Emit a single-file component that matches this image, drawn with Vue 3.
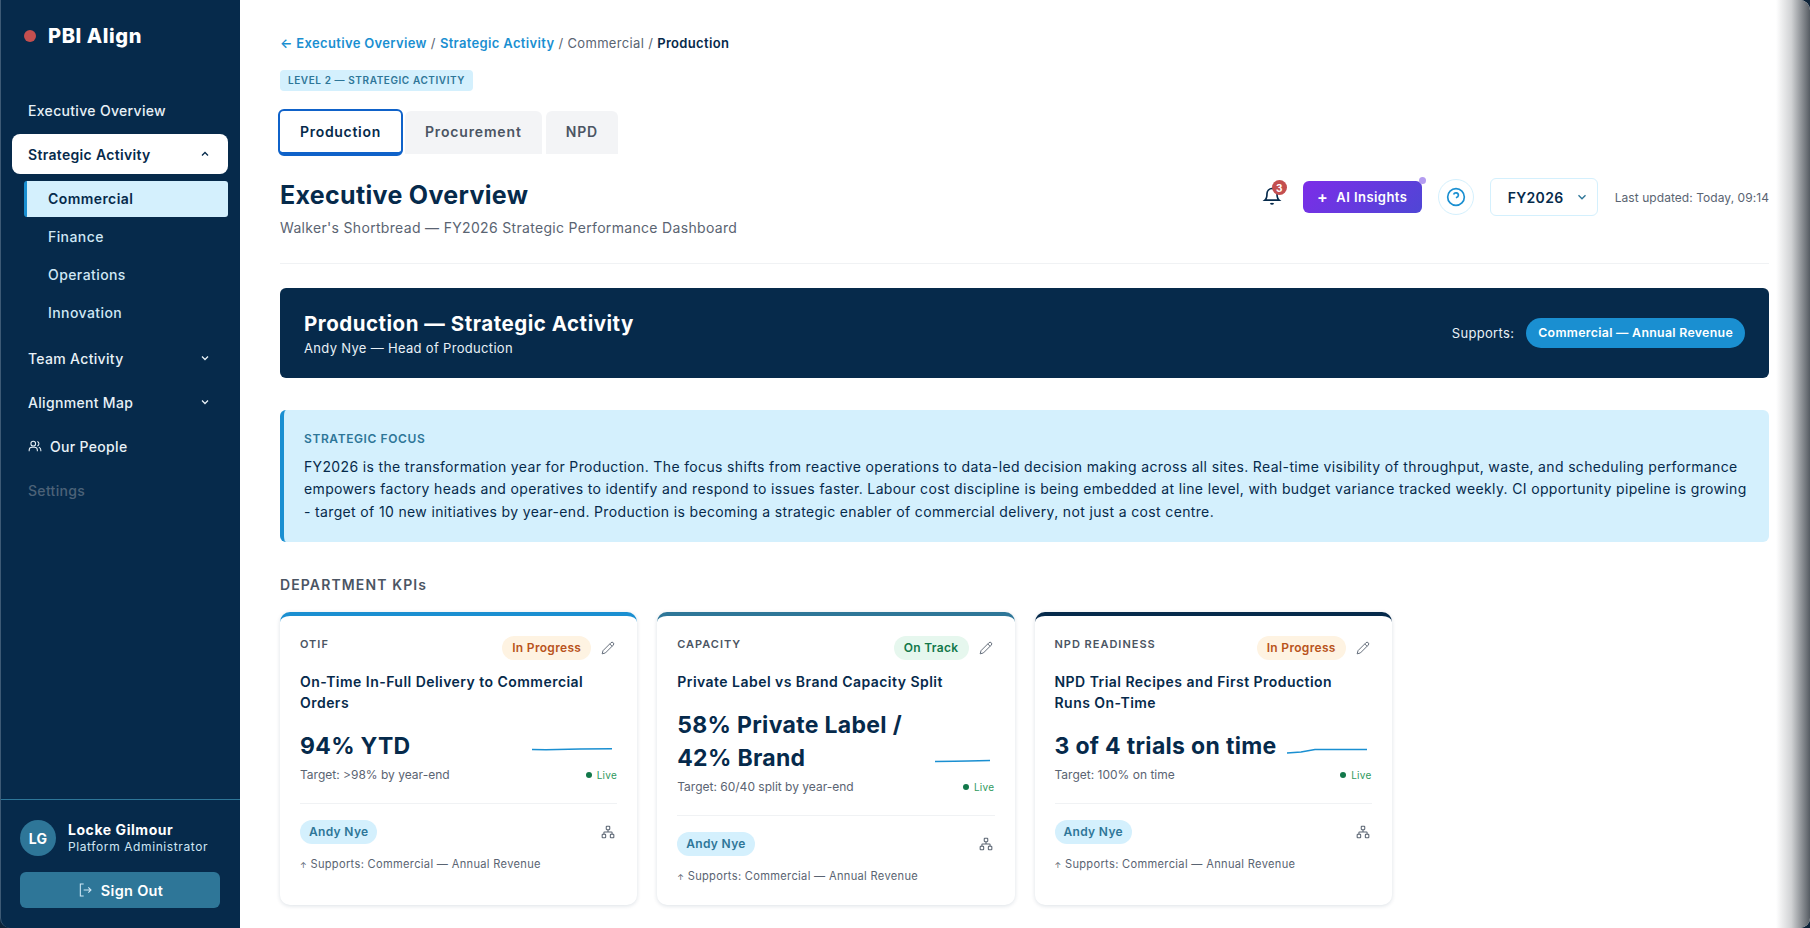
<script setup>
const subNav = [
  { label: 'Commercial', active: true },
  { label: 'Finance' },
  { label: 'Operations' },
  { label: 'Innovation' }
];

const tabs = ['Production', 'Procurement', 'NPD'];

const kpis = [
  {
    tag: 'OTIF',
    accent: '#1a8fd1',
    status: 'In Progress',
    statusClass: 'progress',
    title: 'On-Time In-Full Delivery to Commercial Orders',
    value: '94% YTD',
    target: 'Target: >98% by year-end',
    sparkWidth: 80,
    spark: 'M0 14.6 L14 14.8 L48 14 L80 13.8'
  },
  {
    tag: 'CAPACITY',
    accent: '#2e7698',
    status: 'On Track',
    statusClass: 'track',
    title: 'Private Label vs Brand Capacity Split',
    value: '58% Private Label / 42% Brand',
    target: 'Target: 60/40 split by year-end',
    sparkWidth: 55,
    spark: 'M0 14.6 L28 14.2 L48 14 L80 13.6'
  },
  {
    tag: 'NPD READINESS',
    accent: '#062a4b',
    status: 'In Progress',
    statusClass: 'progress',
    title: 'NPD Trial Recipes and First Production Runs On-Time',
    value: '3 of 4 trials on time',
    target: 'Target: 100% on time',
    sparkWidth: 80,
    spark: 'M0 18 L14 17 L28 14.6 L80 14.4'
  }
];
</script>

<template>
  <div class="app">
    <aside class="sidebar">
      <div class="logo">
        <span class="logo-dot"></span>
        <span class="logo-text">PBI Align</span>
      </div>

      <nav class="nav">
        <a class="nav-item">Executive Overview</a>
        <a class="nav-item active">
          Strategic Activity
          <svg class="chev" viewBox="0 0 12 12"><path d="M3 7.5 6 4.5 9 7.5" /></svg>
        </a>
        <div class="sub-nav">
          <a v-for="s in subNav" :key="s.label" class="sub-item" :class="{ active: s.active }">{{ s.label }}</a>
        </div>
        <a class="nav-item">
          Team Activity
          <svg class="chev" viewBox="0 0 12 12"><path d="M3 4.5 6 7.5 9 4.5" /></svg>
        </a>
        <a class="nav-item">
          Alignment Map
          <svg class="chev" viewBox="0 0 12 12"><path d="M3 4.5 6 7.5 9 4.5" /></svg>
        </a>
        <a class="nav-item people">
          <svg class="people-icon" viewBox="0 0 24 24">
            <circle cx="9" cy="8" r="4" />
            <path d="M2 21v-2a5 5 0 0 1 5-5h4a5 5 0 0 1 5 5v2" />
            <path d="M16 4.2a4 4 0 0 1 0 7.6" />
            <path d="M22 21v-2a5 5 0 0 0-3.5-4.7" />
          </svg>
          <span>Our People</span>
        </a>
        <a class="nav-item muted">Settings</a>
      </nav>

      <div class="user-box">
        <div class="user">
          <div class="avatar">LG</div>
          <div>
            <div class="user-name">Locke Gilmour</div>
            <div class="user-role">Platform Administrator</div>
          </div>
        </div>
        <button class="sign-out">
          <svg viewBox="0 0 24 24"><path d="M10 3H5v18h5" /><path d="M10 12h11M17 8l4 4-4 4" /></svg>
          Sign Out
        </button>
      </div>
    </aside>

    <main class="main">
      <div class="crumbs"><a>← Executive Overview</a> / <a>Strategic Activity</a> / Commercial / <strong>Production</strong></div>
      <div class="level"><span>LEVEL 2 — STRATEGIC ACTIVITY</span></div>

      <div class="tabs">
        <button v-for="(t, i) in tabs" :key="t" class="tab" :class="{ on: i === 0 }">{{ t }}</button>
      </div>

      <header class="head">
        <div>
          <h1>Executive Overview</h1>
          <p>Walker's Shortbread — FY2026 Strategic Performance Dashboard</p>
        </div>
        <div class="tools">
          <div class="bell">
            <svg viewBox="0 0 24 24">
              <path d="M6 9a6 6 0 0 1 12 0c0 6 2.5 8 2.5 8h-17S6 15 6 9" />
              <path d="M10.3 20.5a2 2 0 0 0 3.4 0" />
            </svg>
            <span class="bell-count">3</span>
          </div>
          <button class="ai">
            <span class="ai-plus">+</span> AI Insights
            <span class="ai-dot"></span>
          </button>
          <button class="help">
            <svg viewBox="0 0 24 24">
              <circle cx="12" cy="12" r="10" />
              <path d="M9.1 9a3 3 0 0 1 5.8 1c0 2-3 3-3 3" />
              <path d="M12 17h.01" />
            </svg>
          </button>
          <div class="year">
            FY2026
            <svg viewBox="0 0 12 12"><path d="M3 4.5 6 7.5 9 4.5" /></svg>
          </div>
          <span class="updated">Last updated: Today, 09:14</span>
        </div>
      </header>

      <section class="banner">
        <div>
          <h2>Production — Strategic Activity</h2>
          <div class="banner-sub">Andy Nye — Head of Production</div>
        </div>
        <div class="supports">
          <span>Supports:</span>
          <b>Commercial — Annual Revenue</b>
        </div>
      </section>

      <section class="focus">
        <div class="focus-label">STRATEGIC FOCUS</div>
        <p>FY2026 is the transformation year for Production. The focus shifts from reactive operations to data-led decision making across all sites. Real-time visibility of throughput, waste, and scheduling performance empowers factory heads and operatives to identify and respond to issues faster. Labour cost discipline is being embedded at line level, with budget variance tracked weekly. CI opportunity pipeline is growing - target of 10 new initiatives by year-end. Production is becoming a strategic enabler of commercial delivery, not just a cost centre.</p>
      </section>

      <h3 class="kpi-head">DEPARTMENT KPIs</h3>

      <div class="kpis">
        <article v-for="k in kpis" :key="k.tag" class="card" :style="{ borderTopColor: k.accent }">
          <div class="card-top">
            <span class="tag">{{ k.tag }}</span>
            <div class="card-actions">
              <span class="status" :class="k.statusClass">{{ k.status }}</span>
              <svg class="edit" viewBox="0 0 24 24">
                <path d="M17 3a2.8 2.8 0 0 1 4 4L7.5 20.5 2 22l1.5-5.5Z" />
                <path d="m15 5 4 4" />
              </svg>
            </div>
          </div>
          <div class="card-title">{{ k.title }}</div>
          <div class="value-row">
            <div class="value">{{ k.value }}</div>
            <svg class="spark" :style="{ width: k.sparkWidth + 'px' }" viewBox="0 0 80 28" preserveAspectRatio="none"><path :d="k.spark" /></svg>
          </div>
          <div class="target-row">
            <span class="target">{{ k.target }}</span>
            <span class="live"><i></i>Live</span>
          </div>
          <div class="owner-row">
            <span class="owner">Andy Nye</span>
            <svg class="tree" viewBox="0 0 24 24">
              <rect x="9" y="2" width="6" height="6" rx="1" />
              <rect x="2" y="16" width="6" height="6" rx="1" />
              <rect x="16" y="16" width="6" height="6" rx="1" />
              <path d="M5 16v-3a1 1 0 0 1 1-1h12a1 1 0 0 1 1 1v3M12 8v4" />
            </svg>
          </div>
          <div class="card-sup"><span class="up">↑</span> Supports: Commercial — Annual Revenue</div>
        </article>
      </div>

      <div class="edge-shadow"></div>
    </main>
  </div>
</template>

<style>
html, body { margin: 0; background: #fff; }
</style>

<style scoped>
.app {
  display: flex;
  height: 928px;
  overflow: hidden;
  background: #0d2338;
  font-family: Inter, "Liberation Sans", sans-serif;
  letter-spacing: 0.02em;
  color: #062a4b;
}
.sidebar {
  width: 240px;
  flex: none;
  background: #062a4b;
  border-left: 1px solid #3d5a75;
  box-sizing: border-box;
  border-bottom-left-radius: 10px;
  display: flex;
  flex-direction: column;
}
.logo { display: flex; align-items: center; gap: 12px; padding: 24px 0 0 23px; height: 24px; }
.logo-dot { width: 12px; height: 12px; border-radius: 50%; background: #c44f4f; }
.logo-text { font-size: 20px; font-weight: 800; color: #fff; letter-spacing: 0.03em; }
.nav { display: flex; flex-direction: column; margin-top: 42px; }
.nav-item {
  display: flex;
  align-items: center;
  justify-content: space-between;
  height: 40px;
  margin: 0 12px 4px 11px;
  padding: 0 17px 0 16px;
  font-size: 14px;
  font-weight: 500;
  color: #e8f1f7;
  border-radius: 8px;
}
.nav-item.active { background: #fff; color: #062a4b; font-weight: 600; }
.nav-item.people { justify-content: flex-start; gap: 8px; }
.nav-item.muted { color: #4c6278; }
.chev { width: 12px; height: 12px; fill: none; stroke: currentColor; stroke-width: 1.3; }
.people-icon { width: 14px; height: 14px; fill: none; stroke: currentColor; stroke-width: 1.8; }
.sub-nav { display: flex; flex-direction: column; margin: 3px 12px 7px 23px; }
.sub-item {
  height: 38px;
  display: flex;
  align-items: center;
  padding-left: 24px;
  font-size: 14px;
  font-weight: 500;
  letter-spacing: 0.03em;
  color: #cfe7f5;
}
.sub-item.active {
  height: 36px;
  padding: 0 0 2px 21px;
  box-sizing: border-box;
  background: #d4f0fd;
  border-left: 3px solid #1a8fd1;
  border-radius: 3px;
  color: #062a4b;
  font-weight: 600;
}
.user-box { margin-top: auto; border-top: 1px solid #2e7698; padding: 20px 19px 20px; }
.user { display: flex; align-items: center; gap: 12px; }
.avatar {
  width: 36px; height: 36px; border-radius: 50%;
  background: #2e7698; color: #fff;
  display: flex; align-items: center; justify-content: center;
  font-size: 14px; font-weight: 700;
}
.user-name { font-size: 14px; font-weight: 700; color: #fff; line-height: 17px; letter-spacing: 0.04em; }
.user-role { font-size: 12px; color: #cfe7f5; line-height: 18px; letter-spacing: 0.05em; }
.sign-out {
  width: 200px; height: 36px; margin-top: 16px;
  border: 0; border-radius: 6px;
  background: #2e7698; color: #fff;
  display: flex; align-items: center; justify-content: center; gap: 8px;
  font: 600 14.5px Inter, sans-serif; letter-spacing: 0.02em;
}
.sign-out svg { width: 16px; height: 16px; fill: none; stroke: #cfe7f5; stroke-width: 1.6; }

.main {
  position: relative; flex: 1; padding: 33px 41px 0 40px; box-sizing: border-box;
  background: #fff; overflow: hidden; border-radius: 0 10px 10px 0;
}
.crumbs { font-size: 13px; line-height: 20px; font-weight: 400; color: #5a6472; letter-spacing: 0.026em; }
.crumbs a { color: #1a8fd1; font-weight: 600; }
.crumbs strong { color: #062a4b; font-weight: 600; }
.level { display: flex; margin-top: 17px; height: 21px; }
.level span {
  height: 21px; line-height: 21px; padding: 0 8px;
  background: #d4f0fd; border-radius: 4px; color: #2e7698;
  font-size: 10px; font-weight: 600; letter-spacing: 0.058em;
}
.tabs { display: flex; gap: 4px; margin-top: 20px; height: 43px; align-items: flex-start; }
.tab {
  height: 43px;
  border: 0; background: #f3f4f6; border-radius: 6px 6px 0 0;
  padding: 0 20px 3px; color: #4b5563;
  font: 600 14px Inter, sans-serif; letter-spacing: 0.06em;
}
.tab.on {
  background: #fff; color: #062a4b;
  margin: -2px -2px 0 -2px;
  padding: 0 20px 1px;
  border: 2px solid #0f62c9; border-bottom-width: 4px; border-radius: 6px;
  height: 47px;
  letter-spacing: 0.05em;
}
.head { display: flex; justify-content: space-between; align-items: flex-start; margin-top: 24px; padding-bottom: 25px; border-bottom: 1px solid #f0f2f4; }
.head h1 { margin: 0; font-size: 25px; line-height: 34px; font-weight: 700; color: #062a4b; }
.head p { margin: 6px 0 0; font-size: 14px; line-height: 20px; color: #5a6472; }
.tools { display: flex; align-items: center; height: 38px; }
.bell { position: relative; width: 20px; height: 20px; margin: -2px 21px 0 0; }
.bell svg { width: 20px; height: 20px; fill: none; stroke: #062a4b; stroke-width: 2; }
.bell-count {
  position: absolute; top: -6px; right: -5px;
  width: 15px; height: 15px; border-radius: 50%;
  background: #c44f4f; color: #fff;
  font-size: 10px; font-weight: 700; letter-spacing: 0;
  display: flex; align-items: center; justify-content: center;
}
.ai {
  position: relative; height: 32px; width: 119px;
  border: 0; border-radius: 6px;
  background: linear-gradient(135deg, #7c2de8, #4f46d5);
  color: #fff; font: 600 13px Inter, sans-serif; letter-spacing: 0.035em;
  display: flex; align-items: center; justify-content: center; gap: 8px;
}
.ai-plus { font-size: 16px; line-height: 1; }
.ai-dot { position: absolute; top: -4px; right: -4px; width: 7px; height: 7px; border-radius: 50%; background: #b49cf0; }
.help {
  width: 36px; height: 36px; margin-left: 16px;
  border: 1px solid #d4f0fd; border-radius: 50%; background: #fff;
  display: flex; align-items: center; justify-content: center; padding: 0;
}
.help svg { width: 20px; height: 20px; fill: none; stroke: #1a8fd1; stroke-width: 2; }
.year {
  width: 108px; height: 38px; margin-left: 16px; box-sizing: border-box;
  border: 1px solid #d4f0fd; border-radius: 6px;
  display: flex; align-items: center; justify-content: space-between;
  padding: 0 8px 0 17px;
  font-size: 14px; font-weight: 600; color: #062a4b;
}
.year svg { width: 14px; height: 14px; fill: none; stroke: #2e7698; stroke-width: 1.2; }
.updated { margin-left: 17px; font-size: 12px; letter-spacing: 0.005em; color: #5a6472; }

.banner {
  margin-top: 24px; height: 90px; box-sizing: border-box; padding: 2px 24px 0;
  background: #062a4b; border-radius: 6px; color: #fff;
  display: flex; align-items: center; justify-content: space-between;
}
.banner h2 { margin: 0; font-size: 20.5px; line-height: 26px; font-weight: 700; letter-spacing: 0.025em; }
.banner-sub { margin-top: 2px; font-size: 13px; line-height: 18px; color: #e8f1f7; }
.supports { display: flex; align-items: center; gap: 12px; font-size: 13px; color: #e8f1f7; margin-top: -2px; }
.supports b { height: 30px; line-height: 30px; padding: 0 12px; border-radius: 15px; background: #1a8fd1; color: #fff; font-size: 12.3px; font-weight: 600; }

.focus {
  margin-top: 32px; height: 132px; box-sizing: border-box; padding: 21px 20px 0 20px;
  background: #d4f0fd; border-left: 4px solid #1a8fd1; border-radius: 6px;
}
.focus-label { font-size: 12px; line-height: 16px; font-weight: 600; letter-spacing: 0.05em; color: #2e7698; }
.focus p { margin: 9px 0 0; font-size: 14px; line-height: 22.4px; color: #062a4b; letter-spacing: 0.025em; }

.kpi-head { margin: 33px 0 0; font-size: 14px; line-height: 20px; font-weight: 600; letter-spacing: 0.08em; color: #4b5563; }
.kpis { display: grid; grid-template-columns: repeat(4, 1fr); gap: 20px; margin-top: 17px; align-items: stretch; }
.card {
  height: 293px; box-sizing: border-box; padding: 20px 20px 0;
  border-top: 4px solid #1a8fd1; border-radius: 10px;
  background: #fff; box-shadow: 0 1px 4px rgba(6, 42, 75, 0.14);
  display: flex; flex-direction: column;
}
.card-top { display: flex; justify-content: space-between; align-items: flex-start; }
.tag { font-size: 11px; line-height: 14px; font-weight: 600; letter-spacing: 0.09em; color: #4b5563; margin-top: 1px; }
.card-actions { display: flex; align-items: center; gap: 10px; }
.status { height: 24px; line-height: 24px; padding: 0 10px; border-radius: 12px; font-size: 12px; font-weight: 600; }
.status.progress { background: #fef3e2; color: #b9531c; }
.status.track { background: #e6f7ee; color: #12784a; }
.edit { width: 14px; height: 14px; fill: none; stroke: #5a6472; stroke-width: 1.6; margin-right: 2px; }
.card-title { margin-top: 11px; padding-right: 10px; font-size: 14px; line-height: 21px; font-weight: 600; letter-spacing: 0.033em; color: #062a4b; }
.value-row { display: flex; align-items: flex-end; gap: 10px; margin-top: 17px; }
.value { flex: 1; font-size: 23px; line-height: 33px; font-weight: 700; color: #062a4b; }
.spark { height: 28px; flex: none; margin-right: 5px; fill: none; stroke: #1a8fd1; stroke-width: 1.5; overflow: visible; }
.target-row { display: flex; justify-content: space-between; align-items: center; margin-top: 3px; }
.target { font-size: 12px; line-height: 18px; color: #5a6472; letter-spacing: 0; }
.live { display: inline-flex; align-items: center; gap: 5px; font-size: 10px; color: #2f9a5e; }
.live i { width: 6px; height: 6px; border-radius: 50%; background: #12784a; }
.owner-row { display: flex; justify-content: space-between; align-items: center; margin-top: 19px; padding-top: 16px; border-top: 1px solid #f0f2f4; }
.owner { height: 24px; line-height: 24px; padding: 0 9px; border-radius: 12px; background: #d4f0fd; color: #2e7698; font-size: 12px; font-weight: 600; }
.tree { width: 14px; height: 14px; fill: none; stroke: #5a6472; stroke-width: 1.8; margin-right: 2px; }
.card-sup { margin-top: 12px; font-size: 11.1px; line-height: 16px; color: #5a6472; }
.up { font-size: 8px; }

.edge-shadow {
  position: absolute; top: 0; right: 0; bottom: 0; width: 34px;
  background: linear-gradient(90deg, rgba(70, 76, 84, 0), rgba(70, 76, 84, 0.25) 45%, #6d7278 90%, #555b62);
  pointer-events: none;
}
</style>
